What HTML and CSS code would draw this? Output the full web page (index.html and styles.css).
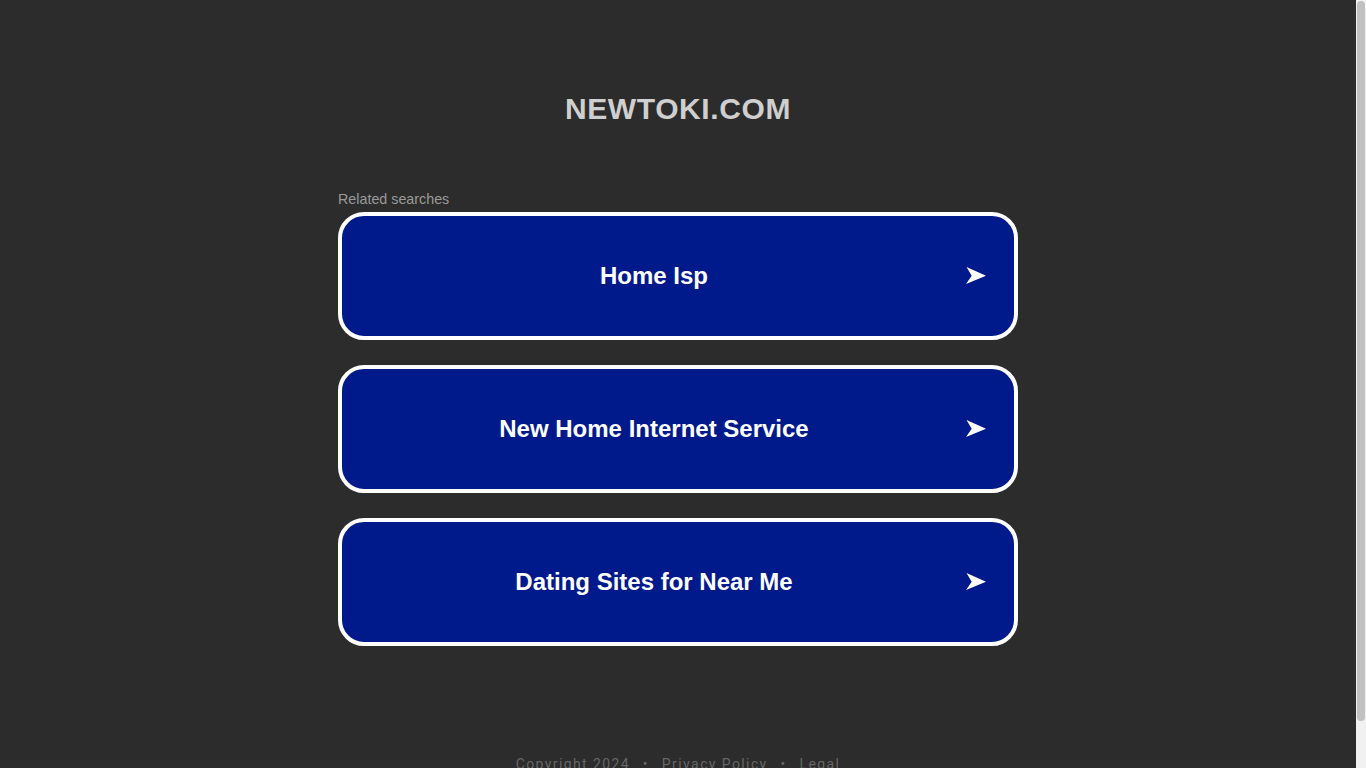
FILE: index.html
```html
<!DOCTYPE html>
<html lang="en">
<head>
<meta charset="utf-8">
<title>newtoki.com</title>
<link rel="stylesheet" href="styles.css">
</head>
<body>
<div class="page">
  <h1 class="domain">NEWTOKI.COM</h1>
  <div class="related">
    <div class="related-label">Related searches</div>
    <a class="card" href="#"><span class="card-text">Home Isp</span><svg class="arrow" viewBox="0 0 20 17" width="20" height="17"><path d="M0.5 0 L20 8.7 L0 17 L5.7 8.7 Z" fill="#fff"/></svg></a>
    <a class="card" href="#"><span class="card-text">New Home Internet Service</span><svg class="arrow" viewBox="0 0 20 17" width="20" height="17"><path d="M0.5 0 L20 8.7 L0 17 L5.7 8.7 Z" fill="#fff"/></svg></a>
    <a class="card" href="#"><span class="card-text">Dating Sites for Near Me</span><svg class="arrow" viewBox="0 0 20 17" width="20" height="17"><path d="M0.5 0 L20 8.7 L0 17 L5.7 8.7 Z" fill="#fff"/></svg></a>
  </div>
  <div class="footer">Copyright 2024 <span class="dot">•</span> Privacy Policy <span class="dot">•</span> Legal</div>
</div>
<div class="scrollbar"><div class="scroll-thumb"></div></div>
</body>
</html>
```
FILE: styles.css
```css
html, body {
  margin: 0;
  padding: 0;
  background: #2c2c2c;
}
body {
  font-family: "Liberation Sans", Arial, sans-serif;
  padding-right: 10px;
}
.page {
  display: flex;
  flex-direction: column;
  align-items: center;
  padding-top: 91px;
  padding-bottom: 40px;
}
.domain {
  margin: 0;
  font-size: 30px;
  line-height: 36px;
  font-weight: bold;
  color: #cfcfcf;
  letter-spacing: 0.6px;
  text-align: center;
}
.related {
  width: 680px;
  margin-top: 64px;
  display: flex;
  flex-direction: column;
}
.related-label {
  font-size: 14.3px;
  line-height: 16px;
  color: #9a9a9a;
  margin-bottom: 5px;
}
.card {
  box-sizing: border-box;
  height: 128px;
  border: 4px solid #fff;
  border-radius: 26px;
  background: #011a8b;
  display: flex;
  align-items: center;
  justify-content: center;
  position: relative;
  text-decoration: none;
  margin-bottom: 25px;
}
.card-text {
  color: #fff;
  font-size: 24px;
  font-weight: bold;
  margin-left: -48px;
}
.arrow {
  position: absolute;
  right: 28px;
  top: 51px;
}
.footer {
  margin-top: 85px;
  font-family: Roboto, "Liberation Sans", sans-serif;
  font-size: 14px;
  color: #666;
  letter-spacing: 1.4px;
}
.dot {
  margin: 0 8px;
}
.scrollbar {
  position: fixed;
  top: 0;
  right: 0;
  width: 10px;
  height: 100vh;
  background: #f1f1f1;
  box-sizing: border-box;
  padding: 1px 1px 0 1px;
}
.scroll-thumb {
  height: 720px;
  background: #c1c1c1;
  border-radius: 4px;
}
```
